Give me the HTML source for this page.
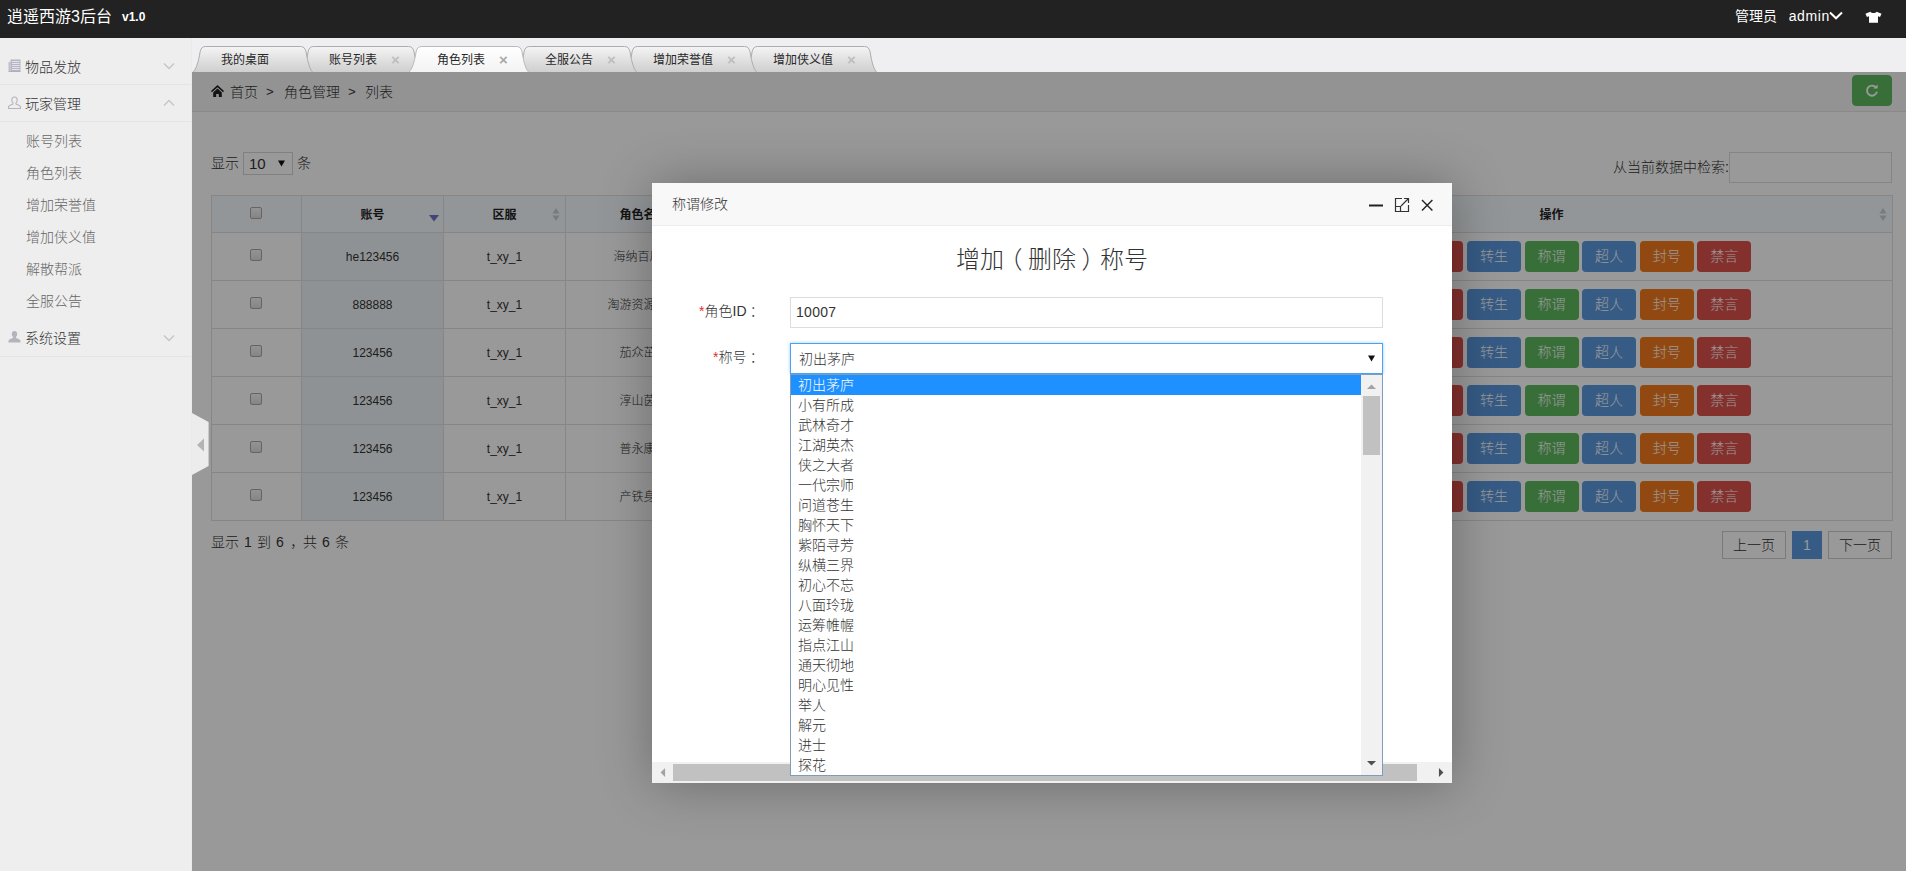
<!DOCTYPE html>
<html lang="zh-CN">
<head>
<meta charset="utf-8">
<title>逍遥西游3后台</title>
<style>
html,body{margin:0;padding:0}
body{width:1906px;height:871px;overflow:hidden;position:relative;background:#fff;color:#333;
 font-family:"Liberation Sans","Noto Sans CJK SC",sans-serif;font-size:14px;line-height:1;font-weight:300}
*{box-sizing:border-box}
.abs{position:absolute}
svg{display:block}
/* header */
#hd{position:absolute;left:0;top:0;width:1906px;height:38px;background:#222;font-weight:400}
#logo{position:absolute;left:7px;top:0;height:34px;line-height:34px;font-size:16px;color:#fff;white-space:nowrap}
#ver{position:absolute;left:122px;top:0;height:34px;line-height:35px;font-size:12px;font-weight:bold;color:#fff}
#user{position:absolute;left:1735px;top:0;height:32px;line-height:32px;font-size:14px;color:#fff;white-space:nowrap}
/* aside */
#aside{position:absolute;left:0;top:38px;width:192px;height:833px;background:#eee;border-right:1px solid #e9e9e9}
.dt{position:absolute;left:0;width:191px;height:37px;border-bottom:1px solid #e5e5e5;color:#333;font-size:14px;line-height:36px;padding-left:25px;white-space:nowrap}
.dt svg{position:absolute}
.sub{position:absolute;left:26px;height:32px;line-height:32px;font-size:14px;color:#666;white-space:nowrap}
/* tab bar */
#tabbar{position:absolute;left:192px;top:38px;width:1714px;height:34px;background:#efeef0}
.tabtxt{font-weight:400;position:absolute;top:46px;height:26px;line-height:29px;font-size:12px;color:#282828;white-space:nowrap}
.tabx{position:absolute;top:46px;height:26px;line-height:27px;font-size:15px;color:#b5b5b5;font-weight:bold}
/* page (iframe content) */
#page{position:absolute;left:192px;top:72px;width:1714px;height:799px;background:#fff;overflow:hidden}
#crumb{position:absolute;left:0;top:0;width:1714px;height:40px;background:#f5f5f5;border-bottom:1px solid #e5e5e5;line-height:41px;font-size:14px;color:#333;white-space:nowrap}
#shade{position:absolute;left:192px;top:72px;width:1714px;height:799px;background:rgba(0,0,0,.4)}

#crumb svg{position:absolute;left:19px;top:13px}
#refresh{position:absolute;left:1660px;top:3px;width:40px;height:31px;background:#5eb95e;border:1px solid #5eb95e;border-radius:4px}
#len{position:absolute;left:19px;top:80px;height:23px;line-height:23px;font-size:14px;color:#333;white-space:nowrap}
#lensel{position:absolute;left:51px;top:80px;width:50px;height:23px;border:1px solid #d6d6d6;background:#fff;font-size:15px;line-height:21px;padding-left:5px;color:#333}
#filter{position:absolute;left:1421px;top:80px;height:30px;line-height:30px;font-size:14px;color:#333;white-space:nowrap}
#finput{position:absolute;left:1537px;top:80px;width:163px;height:31px;border:1px solid #ddd;background:#fff}
table{position:absolute;left:19px;top:123px;width:1681px;border-collapse:collapse;table-layout:fixed;font-size:12px;color:#333}
td,th{border:1px solid #dfdfdf;text-align:center;vertical-align:middle;padding:0;white-space:nowrap;overflow:hidden;position:relative}
th{height:37px;background:#f5fafe;font-weight:bold;color:#222;font-size:12px;padding-top:2px}
td{height:48px;font-size:12px}
td.n{font-size:12.500px}
td.s{background:#eef3f7}
.cb{margin-right:2px;display:inline-block;width:12px;height:12px;border:1px solid #a9a9a9;border-radius:2px;background:linear-gradient(#f6f6f6,#dedede);vertical-align:middle;position:relative;top:-2px}
.btn{display:inline-block;width:54px;height:31px;line-height:29px;border-radius:4px;color:#fff;font-size:14px;text-align:center;margin-right:3.600px;border:1px solid transparent}
.b1{background:#5a98de}.b2{background:#5eb95e}.b3{background:#f37b1d}.b4{background:#dd514c}
.srt{position:absolute;right:5px;top:11px}
#info{word-spacing:1.2px;position:absolute;left:19px;top:459px;height:22px;line-height:22px;font-size:14px;color:#333;white-space:nowrap}
.pg{position:absolute;top:459px;height:28px;line-height:26px;border:1px solid #ccc;background:#fff;color:#333;font-size:14px;text-align:center}

/* modal */
#modal{position:absolute;left:652px;top:183px;width:800px;height:600px;background:#fff;box-shadow:1px 1px 50px rgba(0,0,0,.3);overflow:hidden}
#mtitle{position:absolute;left:0;top:0;width:800px;height:43px;background:#f8f8f8;border-bottom:1px solid #eee;padding-left:20px;line-height:42px;font-size:14px;color:#333}
#mh{position:absolute;left:0;top:62px;width:800px;text-align:center;font-size:24px;line-height:30px;color:#333}
.lab{position:absolute;left:0;width:108.5px;text-align:right;font-size:14px;color:#333;line-height:20px;white-space:nowrap}
.lab i{color:#e03030;font-style:normal}
#in1{position:absolute;left:138px;top:114px;width:593px;height:31px;border:1px solid #ddd;background:#fff;font-size:14px;line-height:29px;padding-left:5px;letter-spacing:.3px;color:#333}
#sel{position:absolute;left:138px;top:160px;width:593px;height:31px;border:1px solid #4aa3f2;background:#fff;font-size:14px;line-height:31px;padding-left:8px;color:#333;box-shadow:0 0 3px rgba(59,156,240,.5)}
#dd{position:absolute;left:138px;top:191px;width:593px;height:402px;border:1px solid #7f9db9;background:#fff;z-index:3}
.op{position:absolute;left:0;width:570px;height:20px;line-height:20px;font-size:14px;color:#333;padding-left:7px;white-space:nowrap}
.op.on{background:#1e90ff;color:#fff}
#vsb{position:absolute;left:570px;top:0;width:21px;height:400px;background:#f1f1f1}
#vth{position:absolute;left:2px;top:21px;width:17px;height:59px;background:#c1c1c1}
#hsb{position:absolute;left:0;top:579px;width:800px;height:21px;background:#f1f1f1;z-index:1}
#hth{position:absolute;left:21px;top:2px;width:744px;height:17px;background:#c1c1c1}
.pl{position:relative;left:-.23em}.pr{position:relative;left:.23em}
</style>
</head>
<body>
<div id="hd">
  <div id="logo">逍遥西游3后台</div>
  <div id="ver">v1.0</div>
  <div id="user">管理员&nbsp;&nbsp;&nbsp;<span style="letter-spacing:.6px">admin</span></div>
  <svg class="abs" style="left:1829px;top:11px" width="14" height="9" viewBox="0 0 14 9"><path d="M1 1.5l6 5.8 6-5.8" fill="none" stroke="#fff" stroke-width="2"/></svg>
  <svg class="abs" style="left:1865px;top:11px" width="17" height="12" viewBox="0 0 19 13"><path d="M6 .5c1 1.200 2.200 1.600 3.500 1.600s2.500-.4 3.500-1.600l5.500 2.500-1.700 3.600-2.300-.9v7.300h-10v-7.300l-2.300.9-1.700-3.600z" fill="#fff"/></svg>
</div>
<div id="aside">
  <div class="dt" style="top:10px;line-height:38px">物品发放
    <svg style="left:8px;top:11px" width="13" height="13" viewBox="0 0 13 13"><path d="M2.5 .5h10v11.5h-10z" fill="#b4b4c2"/><path d="M.5 3H2.5v9h-2z" fill="#bfbfcb"/><path d="M.5 12h12v1h-12z" fill="#aeaebc"/><path d="M4 2.5h7.5M4 4.5h7.5M4 6.5h7.5M4 8.5h7.5M4 10.5h7.5" stroke="#e9e9f0" stroke-width=".9"/></svg>
    <svg style="left:163px;top:14px" width="12" height="8" viewBox="0 0 12 8"><path d="M1 1.5l5 5 5-5" fill="none" stroke="#c6c6c6" stroke-width="1.4"/></svg>
  </div>
  <div class="dt" style="top:47px;line-height:38px">玩家管理
    <svg style="left:8px;top:11px" width="13" height="14" viewBox="0 0 13 14"><path d="M6.5 1c1.7 0 2.7 1.3 2.7 3 0 1.2-.5 2.3-1.2 2.9v1c1.8.6 4 1.500 4.400 2.600.2.600.100 1.700.100 2h-12c0-.3-.1-1.400.1-2 .4-1.100 2.600-2 4.400-2.600v-1c-.7-.6-1.200-1.700-1.200-2.900 0-1.700 1-3 2.700-3z" fill="none" stroke="#b4b4be" stroke-width="1.1"/></svg>
    <svg style="left:163px;top:14px" width="12" height="8" viewBox="0 0 12 8"><path d="M1 6.500l5-5 5 5" fill="none" stroke="#c6c6c6" stroke-width="1.4"/></svg>
  </div>
  <div class="sub" style="top:87px">账号列表</div>
  <div class="sub" style="top:119px">角色列表</div>
  <div class="sub" style="top:151px">增加荣誉值</div>
  <div class="sub" style="top:183px">增加侠义值</div>
  <div class="sub" style="top:215px">解散帮派</div>
  <div class="sub" style="top:247px">全服公告</div>
    <div class="dt" style="top:282px">系统设置
    <svg style="left:8px;top:10px" width="13" height="14" viewBox="0 0 13 14"><path d="M6.500 1c1.700 0 2.700 1.300 2.700 3 0 1.200-.5 2.300-1.200 2.900v1c1.800.6 4 1.500 4.400 2.600.2.600.100 1.700.100 2h-12c0-.3-.1-1.400.1-2 .4-1.100 2.600-2 4.400-2.600v-1c-.7-.6-1.200-1.700-1.200-2.900 0-1.700 1-3 2.700-3z" fill="#b4b4be"/></svg>
    <svg style="left:163px;top:14px" width="12" height="8" viewBox="0 0 12 8"><path d="M1 1.500l5 5 5-5" fill="none" stroke="#c6c6c6" stroke-width="1.400"/></svg>
  </div>
</div>
<div id="tabbar"><svg class="abs" style="left:0;top:0" width="1714" height="34" viewBox="0 0 1714 34"><defs><linearGradient id="tg" x1="0" y1="0" x2="0" y2="1"><stop offset="0" stop-color="#f4f4f4"/><stop offset="1" stop-color="#cfcfcf"/></linearGradient><linearGradient id="ta" x1="0" y1="0" x2="0" y2="1"><stop offset="0" stop-color="#ffffff"/><stop offset="1" stop-color="#f3f3f3"/></linearGradient></defs><path d="M553.0 34 C556.0 31 558.0 26 560.2 13.5 C561.0 10.5 562.0 8.5 565.5 8.5 L672.5 8.5 C676.0 8.5 677.0 10.5 678.0 13.5 C680.0 26 682.0 31 684.5 34Z" fill="url(#tg)" stroke="none"/><path d="M553.0 34 C556.0 31 558.0 26 560.2 13.5 C561.0 10.5 562.0 8.5 565.5 8.5 L672.5 8.5 C676.0 8.5 677.0 10.5 678.0 13.5 C680.0 26 682.0 31 684.5 34" fill="none" stroke="#acacac" stroke-width="1"/><path d="M433.0 34 C436.0 31 438.0 26 440.2 13.5 C441.0 10.5 442.0 8.5 445.5 8.5 L552.5 8.5 C556.0 8.5 557.0 10.5 558.0 13.5 C560.0 26 562.0 31 564.5 34Z" fill="url(#tg)" stroke="none"/><path d="M433.0 34 C436.0 31 438.0 26 440.2 13.5 C441.0 10.5 442.0 8.5 445.5 8.5 L552.5 8.5 C556.0 8.5 557.0 10.5 558.0 13.5 C560.0 26 562.0 31 564.5 34" fill="none" stroke="#acacac" stroke-width="1"/><path d="M325.0 34 C328.0 31 330.0 26 332.2 13.5 C333.0 10.5 334.0 8.5 337.5 8.5 L432.5 8.5 C436.0 8.5 437.0 10.5 438.0 13.5 C440.0 26 442.0 31 444.5 34Z" fill="url(#tg)" stroke="none"/><path d="M325.0 34 C328.0 31 330.0 26 332.2 13.5 C333.0 10.5 334.0 8.5 337.5 8.5 L432.5 8.5 C436.0 8.5 437.0 10.5 438.0 13.5 C440.0 26 442.0 31 444.5 34" fill="none" stroke="#acacac" stroke-width="1"/><path d="M109.0 34 C112.0 31 114.0 26 116.2 13.5 C117.0 10.5 118.0 8.5 121.5 8.5 L216.5 8.5 C220.0 8.5 221.0 10.5 222.0 13.5 C224.0 26 226.0 31 228.5 34Z" fill="url(#tg)" stroke="none"/><path d="M109.0 34 C112.0 31 114.0 26 116.2 13.5 C117.0 10.5 118.0 8.5 121.5 8.5 L216.5 8.5 C220.0 8.5 221.0 10.5 222.0 13.5 C224.0 26 226.0 31 228.5 34" fill="none" stroke="#acacac" stroke-width="1"/><path d="M1.0 34 C4.0 31 6.0 26 8.2 13.5 C9.0 10.5 10.0 8.5 13.5 8.5 L108.5 8.5 C112.0 8.5 113.0 10.5 114.0 13.5 C116.0 26 118.0 31 120.5 34Z" fill="url(#tg)" stroke="none"/><path d="M1.0 34 C4.0 31 6.0 26 8.2 13.5 C9.0 10.5 10.0 8.5 13.5 8.5 L108.5 8.5 C112.0 8.5 113.0 10.5 114.0 13.5 C116.0 26 118.0 31 120.5 34" fill="none" stroke="#acacac" stroke-width="1"/><path d="M217.0 34 C220.0 31 222.0 26 224.2 13.5 C225.0 10.5 226.0 8.5 229.5 8.5 L324.5 8.5 C328.0 8.5 329.0 10.5 330.0 13.5 C332.0 26 334.0 31 336.5 34Z" fill="url(#ta)" stroke="none"/><path d="M217.0 34 C220.0 31 222.0 26 224.2 13.5 C225.0 10.5 226.0 8.5 229.5 8.5 L324.5 8.5 C328.0 8.5 329.0 10.5 330.0 13.5 C332.0 26 334.0 31 336.5 34" fill="none" stroke="#b9b9b9" stroke-width="1"/></svg></div>
<div class="tabtxt" style="left:221px">我的桌面</div>
<div class="tabtxt" style="left:329px">账号列表</div><div class="tabx" style="left:391px;color:#bdbdbd">×</div>
<div class="tabtxt" style="left:437px">角色列表</div><div class="tabx" style="left:499px;color:#a9a9a9">×</div>
<div class="tabtxt" style="left:545px">全服公告</div><div class="tabx" style="left:607px;color:#bdbdbd">×</div>
<div class="tabtxt" style="left:653px">增加荣誉值</div><div class="tabx" style="left:727px;color:#bdbdbd">×</div>
<div class="tabtxt" style="left:773px">增加侠义值</div><div class="tabx" style="left:847px;color:#bdbdbd">×</div>

<div id="page">
  <div id="crumb"><svg width="13" height="12" viewBox="0 0 13 12"><path d="M6.500 0L0 6l1 1.200L6.500 2.200 12 7.200 13 6z" fill="#222"/><path d="M6.500 3.600L2.200 7.600V12h3v-3h2.600v3h3V7.600z" fill="#222"/></svg><span style="position:absolute;left:38px">首页</span><span style="position:absolute;left:74px;font-family:'Liberation Mono',monospace;font-size:13px">&gt;</span><span style="position:absolute;left:92px">角色管理</span><span style="position:absolute;left:156px;font-family:'Liberation Mono',monospace;font-size:13px">&gt;</span><span style="position:absolute;left:173px">列表</span>
    <div id="refresh"><svg class="abs" style="left:12px;top:8px" width="14" height="14" viewBox="0 0 14 14"><path d="M11 3.6A5 5 0 1 0 11.9 7.8" fill="none" stroke="#fff" stroke-width="1.9"/><path d="M8.2 4.6h4.4V.4z" fill="#fff"/></svg></div>
  </div>
  <div id="len">显示</div><div id="lensel">10<svg class="abs" style="left:34px;top:7px" width="7" height="7" viewBox="0 0 7 7"><path d="M0 .5h7L3.500 6.500z" fill="#111"/></svg></div><div id="len" style="left:105px">条</div>
  <div id="filter">从当前数据中检索:</div><div id="finput"></div>
  <table><colgroup><col style="width:90px"><col style="width:142px"><col style="width:122px"><col style="width:144px"><col style="width:125px"><col style="width:125px"><col style="width:125px"><col style="width:126px"><col style="width:682px"></colgroup><tr><th><span class="cb"></span></th><th class="s">账号<svg class="srt" style="top:19px;right:4px" width="10" height="7" viewBox="0 0 10 7"><path d="M0 0h10l-5 6.500z" fill="#7074c4"/></svg></th><th>区服<svg class="srt" width="8" height="15" viewBox="0 0 8 15"><path d="M4 1l3.500 5.500h-7z" fill="#c9ccd0"/><path d="M4 14l3.500-5.500h-7z" fill="#c9ccd0"/></svg></th><th>角色名<svg class="srt" width="8" height="15" viewBox="0 0 8 15"><path d="M4 1l3.500 5.500h-7z" fill="#c9ccd0"/><path d="M4 14l3.500-5.500h-7z" fill="#c9ccd0"/></svg></th><th>角色ID<svg class="srt" width="8" height="15" viewBox="0 0 8 15"><path d="M4 1l3.500 5.500h-7z" fill="#c9ccd0"/><path d="M4 14l3.500-5.500h-7z" fill="#c9ccd0"/></svg></th><th>等级<svg class="srt" width="8" height="15" viewBox="0 0 8 15"><path d="M4 1l3.500 5.500h-7z" fill="#c9ccd0"/><path d="M4 14l3.500-5.500h-7z" fill="#c9ccd0"/></svg></th><th>转生<svg class="srt" width="8" height="15" viewBox="0 0 8 15"><path d="M4 1l3.500 5.500h-7z" fill="#c9ccd0"/><path d="M4 14l3.500-5.500h-7z" fill="#c9ccd0"/></svg></th><th>帮派<svg class="srt" width="8" height="15" viewBox="0 0 8 15"><path d="M4 1l3.500 5.500h-7z" fill="#c9ccd0"/><path d="M4 14l3.500-5.500h-7z" fill="#c9ccd0"/></svg></th><th>操作<svg class="srt" width="8" height="15" viewBox="0 0 8 15"><path d="M4 1l3.500 5.500h-7z" fill="#c9ccd0"/><path d="M4 14l3.500-5.500h-7z" fill="#c9ccd0"/></svg></th></tr><tr><td><span class="cb"></span></td><td class="s">he123456</td><td>t_xy_1</td><td>海纳百川</td><td>10007</td><td>120</td><td>3</td><td>无</td><td><span class="btn b2">充值</span><span class="btn b4">物品</span><span class="btn b1">转生</span><span class="btn b2">称谓</span><span class="btn b1">超人</span><span class="btn b3">封号</span><span class="btn b4" style="margin-right:0">禁言</span></td></tr><tr><td><span class="cb"></span></td><td class="s">888888</td><td>t_xy_1</td><td>淘游资源网</td><td>10008</td><td>95</td><td>2</td><td>无</td><td><span class="btn b2">充值</span><span class="btn b4">物品</span><span class="btn b1">转生</span><span class="btn b2">称谓</span><span class="btn b1">超人</span><span class="btn b3">封号</span><span class="btn b4" style="margin-right:0">禁言</span></td></tr><tr><td><span class="cb"></span></td><td class="s">123456</td><td>t_xy_1</td><td>茄众茁</td><td>10009</td><td>60</td><td>1</td><td>无</td><td><span class="btn b2">充值</span><span class="btn b4">物品</span><span class="btn b1">转生</span><span class="btn b2">称谓</span><span class="btn b1">超人</span><span class="btn b3">封号</span><span class="btn b4" style="margin-right:0">禁言</span></td></tr><tr><td><span class="cb"></span></td><td class="s">123456</td><td>t_xy_1</td><td>淳山茵</td><td>10010</td><td>45</td><td>0</td><td>无</td><td><span class="btn b2">充值</span><span class="btn b4">物品</span><span class="btn b1">转生</span><span class="btn b2">称谓</span><span class="btn b1">超人</span><span class="btn b3">封号</span><span class="btn b4" style="margin-right:0">禁言</span></td></tr><tr><td><span class="cb"></span></td><td class="s">123456</td><td>t_xy_1</td><td>普永康</td><td>10011</td><td>30</td><td>0</td><td>无</td><td><span class="btn b2">充值</span><span class="btn b4">物品</span><span class="btn b1">转生</span><span class="btn b2">称谓</span><span class="btn b1">超人</span><span class="btn b3">封号</span><span class="btn b4" style="margin-right:0">禁言</span></td></tr><tr><td><span class="cb"></span></td><td class="s">123456</td><td>t_xy_1</td><td>产铁身</td><td>10012</td><td>1</td><td>0</td><td>无</td><td><span class="btn b2">充值</span><span class="btn b4">物品</span><span class="btn b1">转生</span><span class="btn b2">称谓</span><span class="btn b1">超人</span><span class="btn b3">封号</span><span class="btn b4" style="margin-right:0">禁言</span></td></tr></table>
  <div id="info">显示 1 到 6 <span class="pr" style="left:.1em">，</span>共 6 条</div>
  <div class="pg" style="left:1530px;width:64px">上一页</div>
  <div class="pg" style="left:1600px;width:30px;background:#5a98de;border-color:#5a98de;color:#fff">1</div>
  <div class="pg" style="left:1636px;width:64px">下一页</div>
</div>
<div id="shade"></div>
<svg class="abs" style="left:192px;top:413px" width="17" height="62" viewBox="0 0 17 62"><path d="M0 0L16.6 9V53L0 62z" fill="#ececec"/><path d="M12 25.500v13L5 32z" fill="#b4b4b4"/></svg>
<div id="modal">
  <div id="mtitle">称谓修改</div>
  <svg class="abs" style="left:716px;top:14px" width="66" height="16" viewBox="0 0 66 16">
    <path d="M1 8.500h14" stroke="#222" stroke-width="2" fill="none"/>
    <path d="M34 1.500h-6.500v13h13V8" fill="none" stroke="#333" stroke-width="1.200"/><path d="M27.500 9.500h5v5" fill="none" stroke="#333" stroke-width="1.200"/><path d="M33 9l7.500-7.500M36 1.500h4.500V6" fill="none" stroke="#333" stroke-width="1.200"/>
    <path d="M54 3l10.400 10.400M64.400 3l-10.400 10.400" stroke="#222" stroke-width="1.400" fill="none"/>
  </svg>
  <div id="mh">增加<span class="pl">（</span>删除<span class="pr">）</span>称号</div>
  <div class="lab" style="top:118px"><i>*</i>角色ID<span class="pr">：</span></div>
  <div id="in1">10007</div>
  <div class="lab" style="top:164px"><i>*</i>称号<span class="pr">：</span></div>
  <div id="sel">初出茅庐<svg class="abs" style="left:577px;top:11px" width="7" height="7" viewBox="0 0 7 7"><path d="M0 .5h7L3.500 6.500z" fill="#111"/></svg></div>
  <div id="hsb"><div id="hth"></div>
    <svg class="abs" style="left:8px;top:6px" width="6" height="9" viewBox="0 0 7 11"><path d="M6 0v11L.5 5.500z" fill="#a3a3a3"/></svg>
    <svg class="abs" style="left:786px;top:6px" width="6" height="9" viewBox="0 0 7 11"><path d="M1 0v11l5.500-5.500z" fill="#505050"/></svg>
  </div>
  <div id="dd"><div class="op on" style="top:0px">初出茅庐</div><div class="op" style="top:20px">小有所成</div><div class="op" style="top:40px">武林奇才</div><div class="op" style="top:60px">江湖英杰</div><div class="op" style="top:80px">侠之大者</div><div class="op" style="top:100px">一代宗师</div><div class="op" style="top:120px">问道苍生</div><div class="op" style="top:140px">胸怀天下</div><div class="op" style="top:160px">紫陌寻芳</div><div class="op" style="top:180px">纵横三界</div><div class="op" style="top:200px">初心不忘</div><div class="op" style="top:220px">八面玲珑</div><div class="op" style="top:240px">运筹帷幄</div><div class="op" style="top:260px">指点江山</div><div class="op" style="top:280px">通天彻地</div><div class="op" style="top:300px">明心见性</div><div class="op" style="top:320px">举人</div><div class="op" style="top:340px">解元</div><div class="op" style="top:360px">进士</div><div class="op" style="top:380px">探花</div>
    <div id="vsb"><div id="vth"></div>
      <svg class="abs" style="left:6px;top:9px" width="9" height="5" viewBox="0 0 11 6"><path d="M0 6h11L5.500 .5z" fill="#a3a3a3"/></svg>
      <svg class="abs" style="left:6px;top:386px" width="9" height="5" viewBox="0 0 11 6"><path d="M0 0h11L5.500 5.500z" fill="#505050"/></svg>
    </div>
  </div>
</div>

</body>
</html>
